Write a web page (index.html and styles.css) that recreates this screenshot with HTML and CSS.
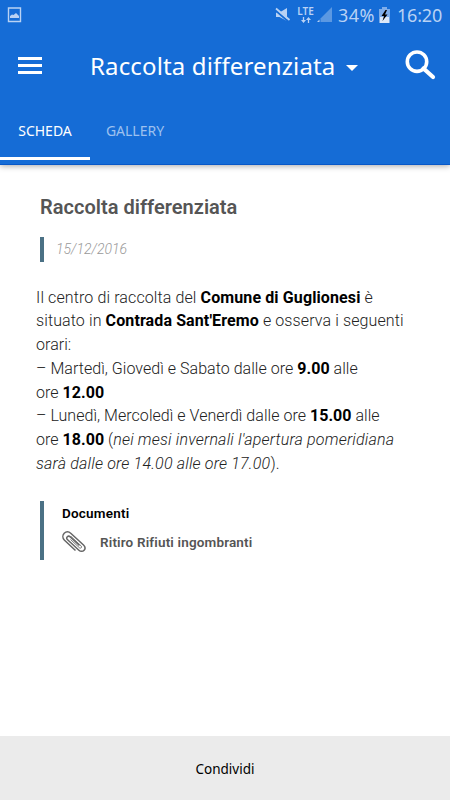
FILE: index.html
```
<!DOCTYPE html>
<html lang="it">
<head>
  <meta charset="utf-8">
  <meta name="viewport" content="width=device-width, initial-scale=1.0">
  <title>Raccolta differenziata</title>
  <link rel="stylesheet" href="styles.css">
</head>
<body>
  <header class="header">
    <!-- Status bar -->
    <div class="status">
      <svg class="status-image" width="15" height="16" viewBox="0 0 15 16">
        <path d="M1.500 1h12v13.500h-12z" fill="none" stroke="#b9d2f4" stroke-width="1.400"/>
        <path d="M3 11V9l2-1.500 1.500.5L9 6l2 2 1 1v2z" fill="#b9d2f4"/>
      </svg>
      <svg class="status-mute" width="16" height="16" viewBox="0 0 16 16">
        <path d="M1 5.500h3.500L12 1v13L4.500 10H1z" fill="#b9d2f4"/>
        <path d="M0 3L14 15" stroke="#156cd6" stroke-width="2"/>
        <path d="M1 1.500L14.500 13" stroke="#b9d2f4" stroke-width="1.800"/>
      </svg>
      <div class="lte">
        <span>LTE</span>
        <svg width="10" height="6" viewBox="0 0 10 6">
          <path d="M2.500 0v4M7.500 6V2" stroke="#b9d2f4" stroke-width="1.300"/>
          <path d="M0 3h5L2.500 6zM5 3h5L7.500 0z" fill="#b9d2f4"/>
        </svg>
      </div>
      <svg class="status-signal" width="16" height="16" viewBox="0 0 16 16">
        <path d="M15 0v15H3.500V11.500z" fill="#5b98e2"/>
        <path d="M0 15l2.500-2.500V15z" fill="#b9d2f4"/>
      </svg>
      <span class="percent">34%</span>
      <svg class="status-battery" width="11" height="16" viewBox="0 0 11 16">
        <path d="M3 0h5v2h2.500v14H.5V2H3z" fill="#dce8f8"/>
        <path d="M3 0h5v2h2.500v8H.5V2H3z" fill="#7fadea"/>
        <path d="M6.500 3L2.500 9h2.500L3.500 14 8.500 7.500H6L8 3z" fill="#000"/>
      </svg>
      <span class="clock">16:20</span>
    </div>

    <!-- Toolbar -->
    <div class="toolbar">
      <div class="menu"><i></i><i></i><i></i></div>
      <h1 class="title">Raccolta differenziata</h1>
      <span class="caret"></span>
      <svg class="search" width="31" height="30" viewBox="0 0 31 30">
        <circle cx="12" cy="11.700" r="9.700" fill="none" stroke="#fff" stroke-width="3.600"/>
        <path d="M18.500 18.500L28 27" stroke="#fff" stroke-width="4.200" stroke-linecap="round"/>
      </svg>
    </div>

    <!-- Tabs -->
    <nav class="tabs">
      <a class="tab active">SCHEDA</a>
      <a class="tab">GALLERY</a>
    </nav>
  </header>

  <main class="content">
    <h2 class="heading">Raccolta differenziata</h2>
    <div class="date">15/12/2016</div>

    <p class="text">
      <span class="wide">Il centro di raccolta del <b>Comune di Guglionesi</b> è</span><br>
      <span class="wide">situato in <b>Contrada Sant'Eremo</b> e osserva i seguenti</span><br>
      orari:<br>
      – Martedì, Giovedì e Sabato dalle ore <b>9.00</b> alle<br>
      ore <b>12.00</b><br>
      – Lunedì, Mercoledì e Venerdì dalle ore <b>15.00</b> alle<br>
      ore <b>18.00</b> (<em>nei mesi invernali l'apertura pomeridiana</em><br>
      <em>sarà dalle ore 14.00 alle ore 17.00</em>).
    </p>

    <!-- Attachments -->
    <section class="documents">
      <h3>Documenti</h3>
      <div class="document">
        <svg width="24" height="22" viewBox="0 0 24 22">
          <path d="M13.500 19.500L2.500 9.300C.2 7 .6 4 2.200 2.300 4 .6 6.800.500 9 2.500L21.500 14c1.800 1.700 1.800 3.800.6 5.200-1.300 1.500-3.500 1.600-5.200 0L5.600 8.800c-1-.9-1.100-2.100-.3-3 .8-.8 2-.8 3 .1l9.200 8.600" fill="none" stroke="#666" stroke-width="1.500"/>
          <path d="M8.500 8.500l9 8.300c1.500 1 2.800-.6 1.600-1.900L9 5.500" fill="none" stroke="#777" stroke-width="1"/>
        </svg>
        <span>Ritiro Rifiuti ingombranti</span>
      </div>
    </section>
  </main>

  <footer class="share">Condividi</footer>
</body>
</html>
```
FILE: styles.css
```
* {
  box-sizing: border-box;
}

body {
  margin: 0;
  height: 800px;
  display: flex;
  flex-direction: column;
  overflow: hidden;
  background: #fff;
  font-family: Roboto, sans-serif;
}

h1, h2, h3, p {
  margin: 0;
}

svg {
  display: block;
  flex: none;
}

/* Header */
.header {
  height: 165px;
  background: #156cd6;
  border-bottom: 1px solid #0858c8;
  box-shadow: 0 1px 6px rgba(0, 0, 0, 0.35);
  font-family: "Noto Sans", sans-serif;
  color: #fff;
}

.status {
  display: flex;
  height: 30px;
  padding: 7px 8px 0 7px;
  color: #b9d2f4;
  white-space: nowrap;
}

.status-mute {
  margin-left: auto;
}

.lte {
  display: flex;
  flex-direction: column;
  align-items: center;
  width: 17px;
  margin-left: 6px;
  font-size: 10px;
  font-weight: 600;
  line-height: 9px;
}

.lte svg {
  margin-top: 1px;
}

.status-signal {
  margin-left: 3px;
}

.percent,
.clock {
  font-size: 18px;
  line-height: 17px;
}

.percent {
  width: 38px;
  margin-left: 5px;
  letter-spacing: 0.5px;
}

.status-battery {
  margin-left: 3px;
}

.clock {
  width: 45px;
  margin-left: 7px;
  letter-spacing: -0.2px;
}

/* Toolbar */
.toolbar {
  display: flex;
  align-items: center;
  height: 70px;
  padding: 0 14px 0 18px;
}

.menu {
  display: flex;
  flex-direction: column;
  gap: 4px;
  width: 24px;
}

.menu i {
  height: 3px;
  background: #fff;
}

.title {
  width: 246px;
  margin: 2px 0 0 48px;
  font-size: 24px;
  font-weight: 400;
  line-height: 34px;
  letter-spacing: 0.14px;
  white-space: nowrap;
}

.caret {
  margin: 5px 0 0 10px;
  border: 6px solid transparent;
  border-top-color: #fff;
  border-bottom: 0;
}

.search {
  margin-left: auto;
}

/* Tabs */
.tabs {
  display: flex;
  height: 60px;
}

.tab {
  width: 90px;
  border-bottom: 3px solid transparent;
  font-size: 14px;
  line-height: 61px;
  text-align: center;
  color: #9dc1ef;
}

.tab.active {
  border-color: #fff;
  color: #fff;
}

/* Page content */
.content {
  flex: 1;
  padding: 30px 36px 0;
}

.heading {
  margin-left: 4px;
  font-size: 20px;
  font-weight: 600;
  line-height: 24px;
  letter-spacing: 0.02px;
  color: #555;
}

.date {
  height: 25px;
  margin: 18px 0 0 4px;
  padding-left: 12px;
  border-left: 4px solid #4b7185;
  font-size: 14px;
  font-style: italic;
  font-weight: 300;
  line-height: 25px;
  color: #999;
}

.text {
  margin-top: 23.5px;
  font-size: 16px;
  font-weight: 300;
  line-height: 23.8px;
  letter-spacing: 0.04px;
  color: #222;
  white-space: nowrap;
}

.text .wide {
  letter-spacing: 0.11px;
}

.text em {
  letter-spacing: 0.19px;
}

.text b {
  font-weight: 700;
  color: #000;
}

/* Documents */
.documents {
  height: 59px;
  margin: 25.5px 0 0 4px;
  padding: 3px 0 0 18px;
  border-left: 4px solid #4b7185;
}

.documents h3 {
  font-size: 13.5px;
  font-weight: 600;
  line-height: 18px;
  letter-spacing: 0.2px;
}

.document {
  display: flex;
  align-items: center;
  gap: 14px;
  margin-top: 9px;
  font-size: 13.5px;
  font-weight: 600;
  line-height: 22px;
  letter-spacing: 0.16px;
  color: #555;
}

/* Footer */
.share {
  height: 64px;
  background: #ebebeb;
  font-family: "Noto Sans", sans-serif;
  font-size: 13.5px;
  line-height: 66px;
  text-align: center;
}
```
